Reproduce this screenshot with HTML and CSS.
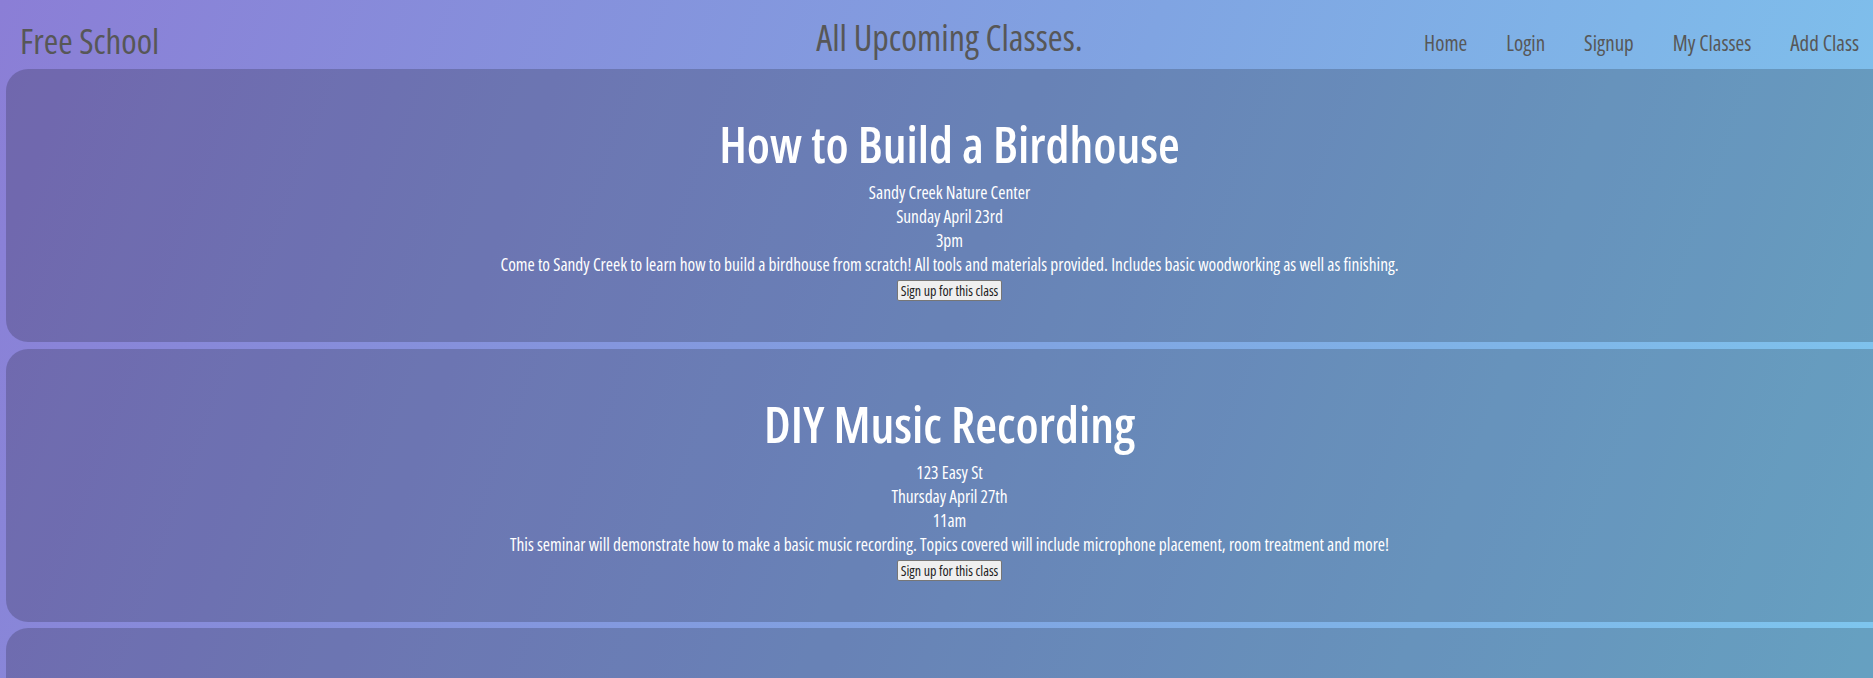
FILE: index.html
```html
<!DOCTYPE html>
<html lang="en">
<head>
<meta charset="utf-8">
<title>Free School</title>
<link rel="stylesheet" href="styles.css">
</head>
<body>
<header class="topbar">
  <div class="brand">Free School</div>
  <h2 class="page-title">All Upcoming Classes.</h2>
  <nav class="nav">
    <a href="#">Home</a>
    <a href="#">Login</a>
    <a href="#">Signup</a>
    <a href="#">My Classes</a>
    <a href="#">Add Class</a>
  </nav>
</header>
<main class="classes">
  <section class="card">
    <h1 class="card-title">How to Build a Birdhouse</h1>
    <p class="line">Sandy Creek Nature Center</p>
    <p class="line">Sunday April 23rd</p>
    <p class="line">3pm</p>
    <p class="line">Come to Sandy Creek to learn how to build a birdhouse from scratch! All tools and materials provided. Includes basic woodworking as well as finishing.</p>
    <button class="signup">Sign up for this class</button>
  </section>
  <section class="card">
    <h1 class="card-title">DIY Music Recording</h1>
    <p class="line">123 Easy St</p>
    <p class="line">Thursday April 27th</p>
    <p class="line">11am</p>
    <p class="line">This seminar will demonstrate how to make a basic music recording. Topics covered will include microphone placement, room treatment and more!</p>
    <button class="signup">Sign up for this class</button>
  </section>
  <section class="card">
    <h1 class="card-title">Intro to Watercolor Painting</h1>
    <p class="line">Community Art Studio</p>
    <p class="line">Saturday April 29th</p>
    <p class="line">1pm</p>
    <p class="line">Learn the basics of watercolor painting. All supplies provided.</p>
    <button class="signup">Sign up for this class</button>
  </section>
</main>
</body>
</html>
```
FILE: styles.css
```css
html, body {
  margin: 0;
  padding: 0;
}
body {
  min-height: 100vh;
  overflow-x: hidden;
  font-family: "Open Sans", "Roboto", sans-serif;
  font-stretch: 75%;
  background: linear-gradient(110deg, #8b7ed6 0%, #80a4e2 55%, #7ec6ee 100%);
  background-attachment: fixed;
}
.topbar {
  height: 69px;
  display: grid;
  grid-template-columns: 1fr auto 1fr;
  align-items: start;
  color: #575757;
}
.brand {
  justify-self: start;
  font-size: 35px;
  font-weight: 500;
  line-height: 40px;
  margin: 21px 0 0 20px;
}
.page-title {
  margin: 18px 0 0 26px;
  font-size: 36px;
  font-weight: 500;
  line-height: 40px;
}
.nav {
  justify-self: end;
  display: flex;
  gap: 39px;
  margin: 29px 14px 0 0;
}
.nav a {
  color: #575757;
  text-decoration: none;
  font-size: 21px;
  line-height: 28px;
}
.classes {
  display: flex;
  flex-direction: column;
  gap: 6.5px;
}
.card {
  margin: 0 -20px 0 6px;
  padding: 46px 0 41px;
  border-radius: 22px;
  background: rgba(0, 0, 0, 0.19);
  color: #fff;
  text-align: center;
  display: flex;
  flex-direction: column;
  align-items: center;
}
.card-title {
  margin: 0 0 7px;
  font-size: 50px;
  font-weight: 600;
  line-height: 58px;
}
.line {
  margin: 0;
  font-size: 17.4px;
  font-weight: 500;
  line-height: 24px;
}
.signup {
  margin-top: 4px;
  height: 21px;
  padding: 0 3px;
  font-family: "Open Sans", "Roboto", sans-serif;
  font-stretch: 75%;
  font-size: 14px;
  line-height: 17px;
  color: #222;
  background: #efefef;
  border: 1px solid #767676;
  border-radius: 2px;
}
```
